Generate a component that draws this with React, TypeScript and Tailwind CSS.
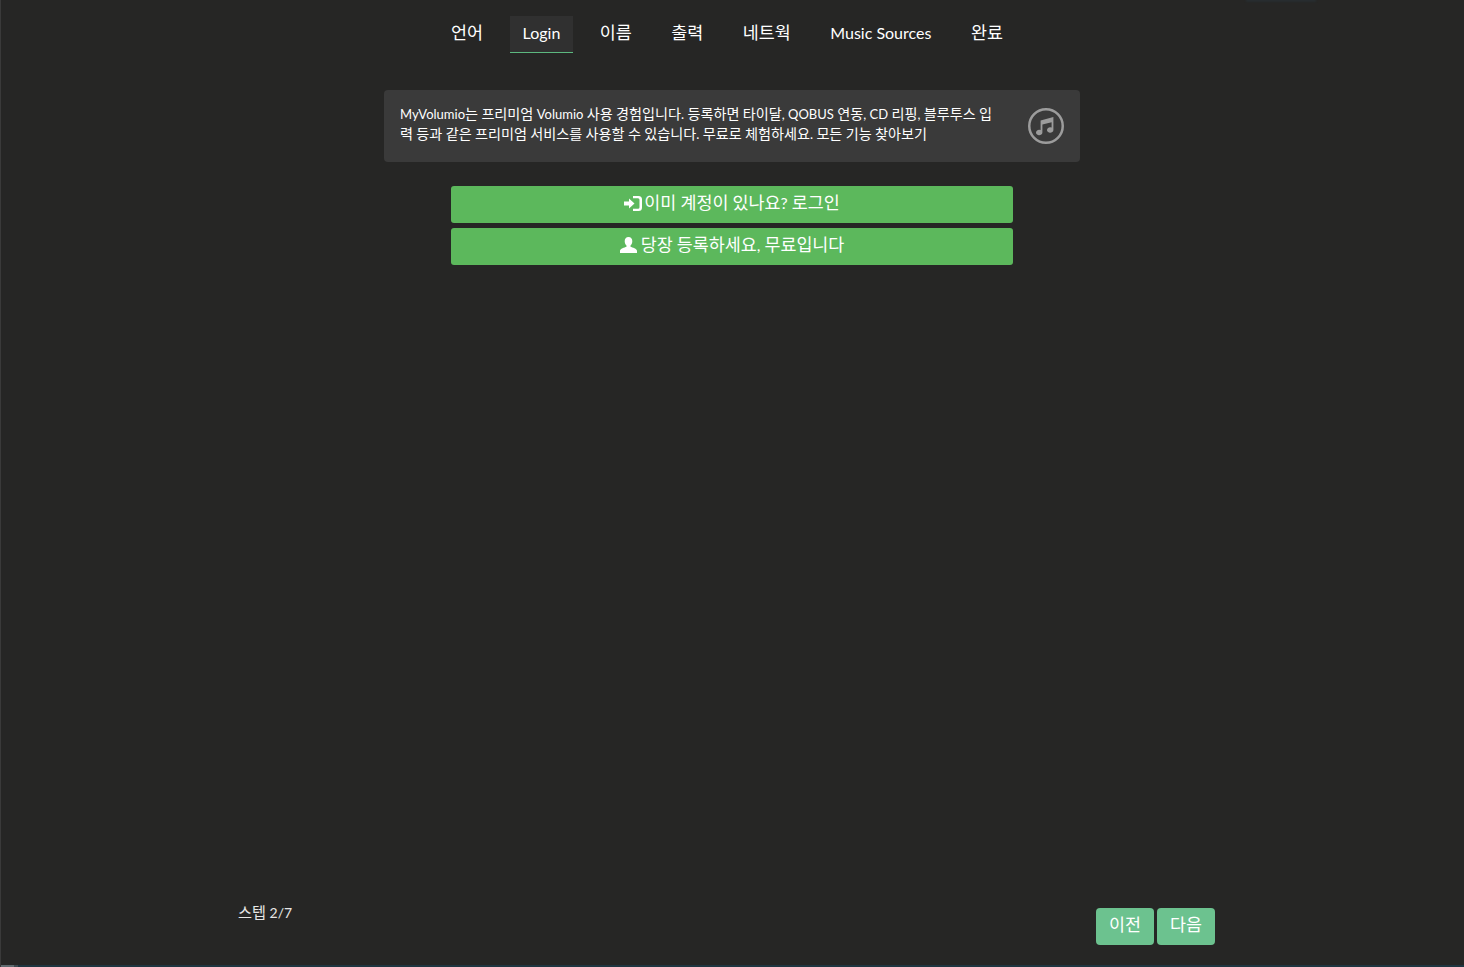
import React from "react";

const STEPS = ["언어", "Login", "이름", "출력", "네트웍", "Music Sources", "완료"];

// hangul runs are set larger so that they advance a full em, as in the picture
function Ko({ text }: { text: string }) {
  return (
    <>
      {text.split(/([\uac00-\ud7a3]+)/).map((part, i) =>
        /[\uac00-\ud7a3]/.test(part) ? (
          <span key={i} className="text-[1.087em]">
            {part}
          </span>
        ) : (
          part
        )
      )}
    </>
  );
}

function LoginIcon() {
  return (
    <svg width="18" height="15" viewBox="0 0 18 15" fill="white" className="mr-[2px]">
      <path d="M0 5.500h5V2.500l5.500 5-5.500 5v-3H0z" />
      <path d="M9 0h5.500A3.500 3.500 0 0 1 18 3.500v8a3.500 3.500 0 0 1-3.500 3.500H9v-2.200h5a1.500 1.500 0 0 0 1.500-1.500V3.700A1.500 1.500 0 0 0 14 2.200H9z" />
    </svg>
  );
}

function UserIcon() {
  return (
    <svg width="17" height="16" viewBox="0 0 17 16" fill="white" className="mr-[4px]">
      <path d="M8.500 0C6 0 4.700 1.800 4.700 4.200c0 1.700.7 3.300 1.800 4.300v1.300C4.500 10.800 0 11.500 0 14v2h17v-2c0-2.500-4.500-3.200-6.500-4.200V8.500c1.100-1 1.800-2.600 1.800-4.300C12.300 1.800 11 0 8.500 0z" />
    </svg>
  );
}

function MusicIcon() {
  return (
    <svg width="36" height="36" viewBox="0 0 36 36" fill="none" className="shrink-0">
      <circle cx="18" cy="18" r="16.750" stroke="#9c9c9c" strokeWidth="2.500" />
      <path
        d="M12.600 12.500L25.400 9V22a3.200 2.700 0 1 1-1.800-2.400V14.200L14.400 16.500V24.500a3.200 2.700 0 1 1-1.800-2.400z"
        fill="#9c9c9c"
      />
    </svg>
  );
}

export default function App() {
  return (
    <div className="relative h-[967px] overflow-hidden flex flex-col bg-[#262625] text-white border-l border-[#3a3a3a] font-['Lato','Noto_Sans_CJK_KR',sans-serif]">
      <div className="absolute top-0 left-[1245px] w-[70px] h-px bg-[#2a3a44] blur-[1px]" />

      {/* Step tabs */}
      <div className="flex justify-center gap-[13.500px] pt-4 pr-[11px]">
        {STEPS.map((step) => (
          <div
            key={step}
            className={`h-[37px] px-[13px] text-base leading-[34px] ${
              step === "Login" ? "bg-[#303030] border-b border-[#5cb87f]" : ""
            }`}
          >
            <Ko text={step} />
          </div>
        ))}
      </div>

      {/* Info box */}
      <div className="w-[696px] h-[72px] mt-[37px] ml-[383px] pl-4 pr-4 flex items-center justify-between rounded bg-[#3a3a3a]">
        <p className="w-[596px] text-[13px] leading-[19px] pb-[4px]">
          <Ko text="MyVolumio는 프리미엄 Volumio 사용 경험입니다. 등록하면 타이달, QOBUS 연동, CD 리핑, 블루투스 입력 등과 같은 프리미엄 서비스를 사용할 수 있습니다. 무료로 체험하세요. 모든 기능 찾아보기" />
        </p>
        <MusicIcon />
      </div>

      {/* Login buttons */}
      <div className="w-[562px] mt-6 ml-[450px] flex flex-col gap-[5px]">
        <button className="h-[37px] pb-[3px] flex items-center justify-center rounded-[3px] bg-[#5cb85c] text-base">
          <LoginIcon />
          <span>
            <Ko text="이미 계정이 있나요? 로그인" />
          </span>
        </button>
        <button className="h-[37px] pb-[3px] flex items-center justify-center rounded-[3px] bg-[#5cb85c] text-base">
          <UserIcon />
          <span>
            <Ko text="당장 등록하세요, 무료입니다" />
          </span>
        </button>
      </div>

      {/* Footer */}
      <div className="mt-auto pl-[237px] pr-[249px] pb-[20px] flex justify-between items-start">
        <span className="text-sm leading-[20px] mt-[-6px] text-[#e6e6e6]">
          <Ko text="스텝 2/7" />
        </span>
        <div className="flex gap-[3px]">
          <button className="w-[58px] h-[37px] pb-[3px] rounded bg-[#6cc28f] text-base">
            <Ko text="이전" />
          </button>
          <button className="w-[58px] h-[37px] pb-[3px] rounded bg-[#6cc28f] text-base">
            <Ko text="다음" />
          </button>
        </div>
      </div>

      {/* Bottom strip */}
      <div className="h-[2px] flex bg-[#1f3540]">
        <div className="w-[13px] bg-[#5f6b70]" />
        <div className="w-[4px] bg-[#3d4a50]" />
      </div>
    </div>
  );
}
